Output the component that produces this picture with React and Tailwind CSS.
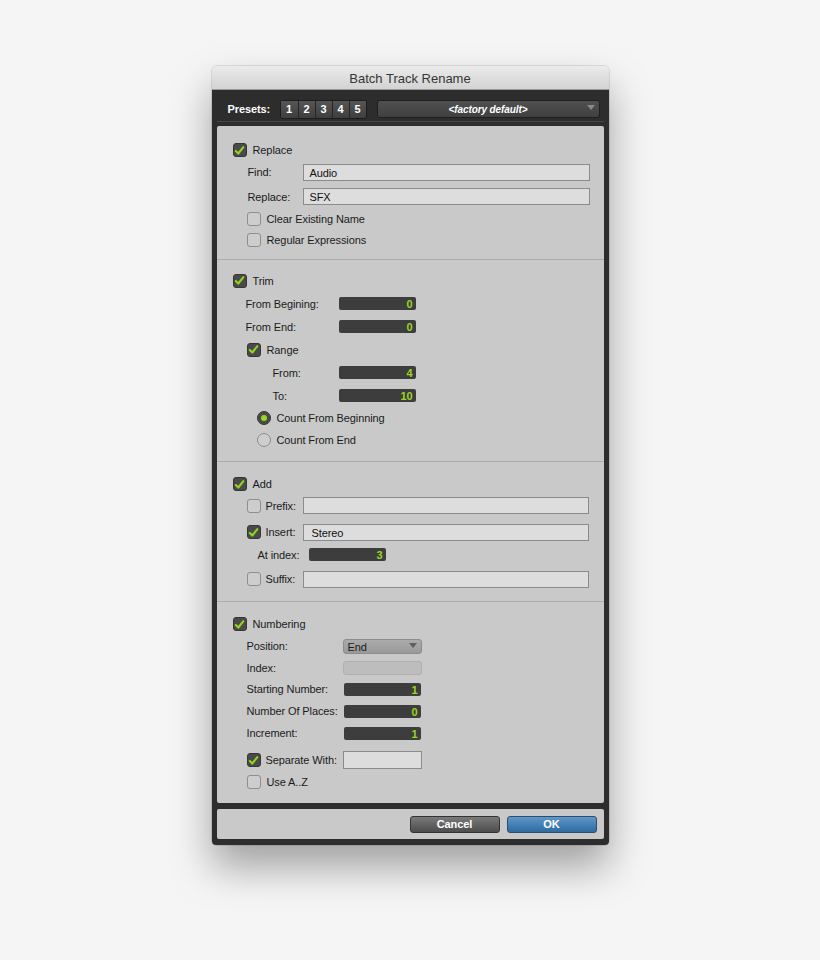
import React from "react";

function CheckBox({ checked }) {
  if (checked) {
    return (
      <span className="w-[14px] h-[14px] rounded-[3px] bg-[#4a4a4a] border border-[#363636] flex items-center justify-center shrink-0">
        <svg width="11" height="11" viewBox="0 0 12 12">
          <path
            d="M2 6.6 L4.7 9.3 L10.2 2.4"
            fill="none"
            stroke="#94d41c"
            strokeWidth="2.3"
            strokeLinecap="round"
            strokeLinejoin="round"
          />
        </svg>
      </span>
    );
  }
  return <span className="w-[14px] h-[14px] rounded-[3px] bg-[#cdcdcd] border border-[#8e8e8e] shrink-0" />;
}

function Radio({ checked }) {
  if (checked) {
    return (
      <span className="w-[14px] h-[14px] rounded-full bg-[#4a4a4a] border border-[#363636] flex items-center justify-center shrink-0">
        <span className="w-[6px] h-[6px] rounded-full bg-[#9ad81e]" />
      </span>
    );
  }
  return <span className="w-[14px] h-[14px] rounded-full bg-[#cdcdcd] border border-[#8e8e8e] shrink-0" />;
}

function TextField({ value, className = "" }) {
  return (
    <div
      className={`h-[17px] bg-[#dddddd] border border-[#8b8b8b] pl-[6px] text-[11px] leading-[16px] text-[#111] ${className}`}
    >
      {value}
    </div>
  );
}

function NumField({ value }) {
  return (
    <div className="w-[77px] h-[13px] rounded-[2px] bg-[#3d3d3d] text-right pr-[3px] text-[11px] leading-[14px] font-bold text-[#9bd61f]">
      {value}
    </div>
  );
}

function CheckRow({ checked, label, indent = "pl-[16px]", height = "h-[22px]", extra = "" }) {
  return (
    <div className={`flex items-center gap-[6px] ${indent} ${height} ${extra}`}>
      <CheckBox checked={checked} />
      <span className="pt-[1px]">{label}</span>
    </div>
  );
}

function NumRow({ label, value, labelClass }) {
  return (
    <div className="flex items-center h-[23px]">
      <span className={`pt-[1px] ${labelClass}`}>{label}</span>
      <NumField value={value} />
    </div>
  );
}

export default function App() {
  return (
    <div className="min-h-[960px] bg-[#f5f5f5] pt-[66px] font-[family-name:Liberation_Sans,Arial,sans-serif] text-[11px] tracking-[-0.1px] text-[#1b1b1b]">
      <div className="w-[397px] mx-auto rounded-[5px] shadow-[0_0_0_1px_rgba(0,0,0,0.1),0_22px_40px_rgba(0,0,0,0.35)]">
        {/* Title bar */}
        <div className="h-[24px] rounded-t-[5px] bg-gradient-to-b from-[#ebebeb] to-[#d3d3d3] border-b border-[#9a9a9a] flex items-center justify-center pt-[2px] text-[13px] tracking-normal text-[#353535]">
          Batch Track Rename
        </div>

        {/* Dark frame */}
        <div className="bg-[#2d2d2d] rounded-b-[4px] px-[5px] pb-[6px]">
          {/* Presets */}
          <div className="h-[31px] flex items-center pt-[7px] pl-[11px] pr-[4px]">
            <span className="w-[52px] font-bold text-white">Presets:</span>
            <div className="flex border border-[#1c1c1c] rounded-[2px]">
              {["1", "2", "3", "4", "5"].map((n) => (
                <div
                  key={n}
                  className="w-[17px] h-[17px] flex items-center justify-center bg-gradient-to-b from-[#565656] to-[#3e3e3e] border-l border-[#252525] first:border-l-0 text-white font-bold"
                >
                  {n}
                </div>
              ))}
            </div>
            <div className="ml-[10px] flex-1 h-[18px] rounded-[3px] bg-gradient-to-b from-[#505050] to-[#404040] border border-[#1f1f1f] flex items-center justify-center relative">
              <span className="italic font-bold text-[10px] text-white">&lt;factory default&gt;</span>
              <svg className="absolute right-[4px] top-[4px]" width="8" height="6" viewBox="0 0 8 6">
                <path d="M0 0 L8 0 L4 5 Z" fill="#8a8a8a" />
              </svg>
            </div>
          </div>
          <div className="h-px bg-[#474747]" />
          <div className="h-[4px]" />

          {/* Main panel */}
          <div className="bg-[#c9c9c9] rounded-[2px] flex flex-col">
            {/* Replace */}
            <div className="h-[133px] pt-[13px]">
              <CheckRow checked label="Replace" />
              <div className="flex items-center h-[22px]">
                <span className="w-[86px] pl-[31px] pt-[1px]">Find:</span>
                <TextField value="Audio" className="flex-1 mr-[14px]" />
              </div>
              <div className="flex items-center h-[23px] mt-[2px]">
                <span className="w-[86px] pl-[31px] pt-[1px]">Replace:</span>
                <TextField value="SFX" className="flex-1 mr-[14px]" />
              </div>
              <CheckRow checked={false} label="Clear Existing Name" indent="pl-[30px]" extra="gap-[5px]" />
              <CheckRow checked={false} label="Regular Expressions" indent="pl-[30px]" height="h-[20px]" extra="gap-[5px]" />
            </div>

            {/* Trim */}
            <div className="h-[202px] border-t border-[#acacac] pt-[9px]">
              <CheckRow checked label="Trim" height="h-[23px]" />
              <NumRow label="From Begining:" value="0" labelClass="w-[122px] pl-[29px]" />
              <NumRow label="From End:" value="0" labelClass="w-[122px] pl-[29px]" />
              <CheckRow checked label="Range" indent="pl-[30px]" height="h-[23px]" />
              <NumRow label="From:" value="4" labelClass="w-[122px] pl-[56px]" />
              <NumRow label="To:" value="10" labelClass="w-[122px] pl-[56px]" />
              <div className="flex items-center gap-[6px] h-[22px] pl-[40px]">
                <Radio checked />
                <span className="pt-[1px]">Count From Beginning</span>
              </div>
              <div className="flex items-center gap-[6px] h-[22px] pl-[40px]">
                <Radio checked={false} />
                <span className="pt-[1px]">Count From End</span>
              </div>
            </div>

            {/* Add */}
            <div className="h-[140px] border-t border-[#acacac] pt-[11px]">
              <CheckRow checked label="Add" />
              <div className="flex items-center h-[21px] pl-[30px]">
                <CheckBox checked={false} />
                <span className="ml-[5px] w-[37px] pt-[1px]">Prefix:</span>
                <TextField value="" className="flex-1 mr-[15px]" />
              </div>
              <div className="flex items-center h-[22px] mt-[5px] pl-[30px]">
                <CheckBox checked />
                <span className="ml-[5px] w-[37px] pt-[1px]">Insert:</span>
                <TextField value="Stereo" className="flex-1 mr-[15px] pl-[8px]" />
              </div>
              <NumRow label="At index:" value="3" labelClass="w-[92px] pl-[41px]" />
              <div className="flex items-center h-[24px] mt-[1px] pl-[30px]">
                <CheckBox checked={false} />
                <span className="ml-[5px] w-[37px] pt-[1px]">Suffix:</span>
                <TextField value="" className="flex-1 mr-[15px]" />
              </div>
            </div>

            {/* Numbering */}
            <div className="h-[202px] border-t border-[#acacac] pt-[11px]">
              <CheckRow checked label="Numbering" />
              <div className="flex items-center h-[22px]">
                <span className="w-[126px] pl-[30px] pt-[1px]">Position:</span>
                <div className="w-[79px] h-[15px] rounded-[3px] bg-gradient-to-b from-[#ababab] to-[#9a9a9a] border border-[#8c8c8c] pl-[4px] leading-[14px] relative">
                  End
                  <svg className="absolute right-[4px] top-[3px]" width="8" height="6" viewBox="0 0 8 6">
                    <path d="M0 0 L8 0 L4 5 Z" fill="#5e5e5e" />
                  </svg>
                </div>
              </div>
              <div className="flex items-center h-[21px]">
                <span className="w-[126px] pl-[30px] pt-[1px]">Index:</span>
                <div className="w-[79px] h-[14px] rounded-[3px] bg-[#bdbdbd] border border-[#b0b0b0]" />
              </div>
              <div className="flex items-center h-[22px]">
                <span className="w-[127px] pl-[30px] pt-[1px]">Starting Number:</span>
                <NumField value="1" />
              </div>
              <div className="flex items-center h-[22px]">
                <span className="w-[127px] pl-[30px] pt-[1px]">Number Of Places:</span>
                <NumField value="0" />
              </div>
              <div className="flex items-center h-[22px]">
                <span className="w-[127px] pl-[30px] pt-[1px]">Increment:</span>
                <NumField value="1" />
              </div>
              <div className="flex items-center h-[22px] mt-[5px] pl-[30px]">
                <CheckBox checked />
                <span className="ml-[5px] w-[77px] pt-[1px]">Separate With:</span>
                <div className="w-[79px] h-[18px] bg-[#dddddd] border border-[#8b8b8b]" />
              </div>
              <CheckRow checked={false} label="Use A..Z" indent="pl-[30px]" extra="gap-[5px]" />
            </div>
          </div>

          {/* Footer */}
          <div className="mt-[6px] h-[30px] bg-[#c9c9c9] rounded-[2px] flex items-center justify-end gap-[7px] pr-[7px]">
            <div className="w-[90px] h-[17px] rounded-[3px] bg-gradient-to-b from-[#7a7a7a] to-[#4d4d4d] border border-[#333] flex items-center justify-center pt-[1px] text-white font-bold">
              Cancel
            </div>
            <div className="w-[90px] h-[17px] rounded-[3px] bg-gradient-to-b from-[#5e97c8] to-[#2f6ba1] border border-[#2a4d70] flex items-center justify-center pt-[1px] text-white font-bold">
              OK
            </div>
          </div>
        </div>
      </div>
    </div>
  );
}
